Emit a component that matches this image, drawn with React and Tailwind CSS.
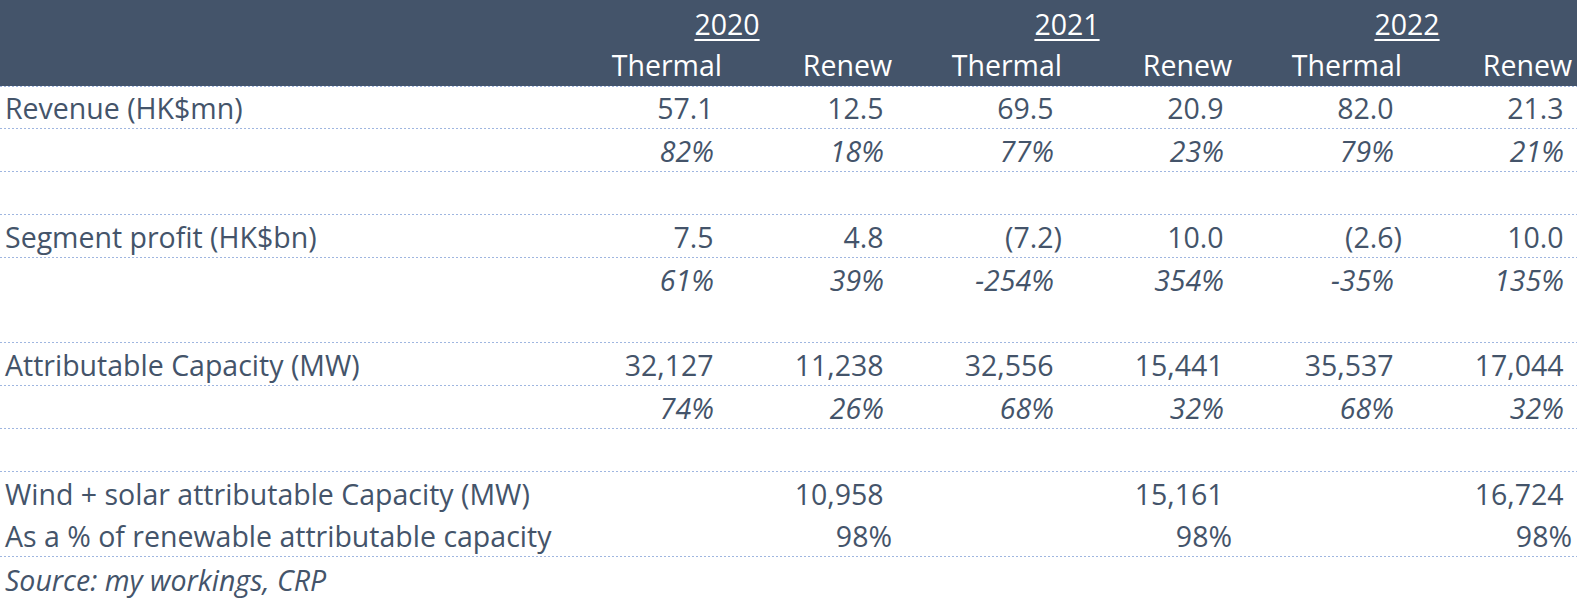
import React from "react";

const LINE =
  "h-px w-[1577px] bg-[repeating-linear-gradient(to_right,#9fb6e0_0px,#9fb6e0_2px,transparent_2px,transparent_4px)]";

const GRID = "grid grid-cols-[557px_repeat(6,170px)]";

function Val({ v, pad = true }) {
  if (!v) return <div />;
  const neg = v.startsWith("(");
  return (
    <div className="flex items-end justify-end pr-[5px] pb-[1px] whitespace-nowrap">
      <span>
        {v}
        {pad && !neg ? <span className="invisible">)</span> : null}
      </span>
    </div>
  );
}

function Row({ label, values, italic, pad = true, h, line = true, labelItalic }) {
  return (
    <>
      <div className={`${GRID} ${h} ${italic ? "italic" : ""}`}>
        <div
          className={`flex items-end pl-[5px] pb-[1px] whitespace-nowrap ${
            labelItalic ? "italic" : ""
          }`}
        >
          {label}
        </div>
        {(values || ["", "", "", "", "", ""]).map((v, i) => (
          <Val key={i} v={v} pad={pad} />
        ))}
      </div>
      {line ? <div className={LINE} /> : <div className="h-px" />}
    </>
  );
}

export default function App() {
  return (
    <div className="w-[1580px] h-[601px] bg-white text-[#44546a] font-['Open_Sans',sans-serif] text-[28.5px] leading-[38px] overflow-hidden">
      {/* Header */}
      <div className="w-[1577px] h-[86px] bg-[#44546a] text-white">
        <div className={`${GRID} h-[43px]`}>
          <div />
          {["2020", "2021", "2022"].map((y) => (
            <div key={y} className="col-span-2 flex items-end justify-center">
              <span className="underline decoration-[2px] underline-offset-[4px]">{y}</span>
            </div>
          ))}
        </div>
        <div className={`${GRID} h-[43px]`}>
          <div />
          {["Thermal", "Renew", "Thermal", "Renew", "Thermal", "Renew"].map((t, i) => (
            <div key={i} className="flex items-end justify-end pr-[5px] pb-[2px]">
              {t}
            </div>
          ))}
        </div>
      </div>
      <div className={LINE} />

      <Row
        h="h-[41px]"
        label="Revenue (HK$mn)"
        values={["57.1", "12.5", "69.5", "20.9", "82.0", "21.3"]}
      />
      <Row
        h="h-[42px]"
        italic
        values={["82%", "18%", "77%", "23%", "79%", "21%"]}
      />
      <Row h="h-[42px]" />
      <Row
        h="h-[42px]"
        label="Segment profit (HK$bn)"
        values={["7.5", "4.8", "(7.2)", "10.0", "(2.6)", "10.0"]}
      />
      <Row
        h="h-[42px]"
        italic
        line={false}
        values={["61%", "39%", "-254%", "354%", "-35%", "135%"]}
      />
      <Row h="h-[41px]" />
      <Row
        h="h-[42px]"
        label="Attributable Capacity (MW)"
        values={["32,127", "11,238", "32,556", "15,441", "35,537", "17,044"]}
      />
      <Row
        h="h-[42px]"
        italic
        values={["74%", "26%", "68%", "32%", "68%", "32%"]}
      />
      <Row h="h-[42px]" />
      <Row
        h="h-[42px]"
        line={false}
        label="Wind + solar attributable Capacity (MW)"
        values={["", "10,958", "", "15,161", "", "16,724"]}
      />
      <Row
        h="h-[41px]"
        pad={false}
        label="As a % of renewable attributable capacity"
        values={["", "98%", "", "98%", "", "98%"]}
      />
      <div className={`${GRID} h-[43px]`}>
        <div className="flex items-end pl-[5px] pb-[1px] italic whitespace-nowrap">
          Source: my workings, CRP
        </div>
      </div>
    </div>
  );
}
